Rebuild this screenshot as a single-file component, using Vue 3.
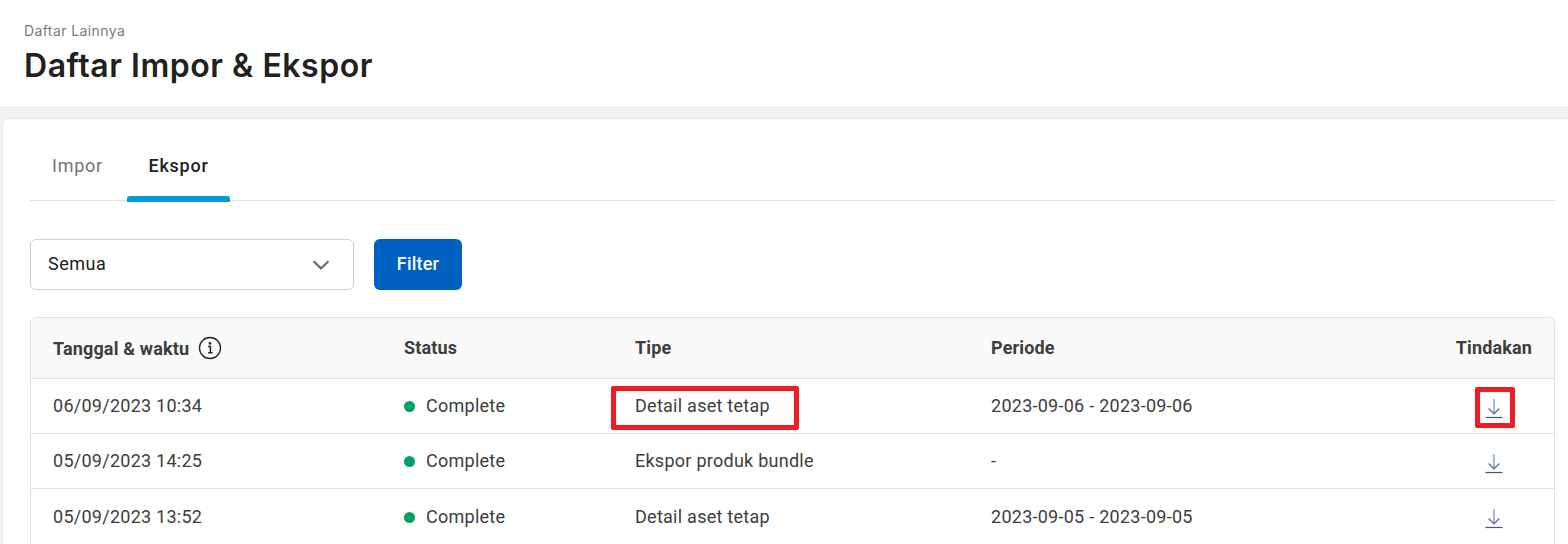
<script setup>
const rows = [
  { date: '06/09/2023 10:34', type: 'Detail aset tetap', period: '2023-09-06 - 2023-09-06', mark: true },
  { date: '05/09/2023 14:25', type: 'Ekspor produk bundle', period: '-', mark: false },
  { date: '05/09/2023 13:52', type: 'Detail aset tetap', period: '2023-09-05 - 2023-09-05', mark: false },
]
</script>

<template>
  <div class="page">
    <header class="head">
      <div class="crumb">Daftar Lainnya</div>
      <h1 class="title">Daftar Impor &amp; Ekspor</h1>
    </header>
    <main class="card">
      <nav class="tabs">
        <div class="tab">Impor</div>
        <div class="tab active">Ekspor</div>
      </nav>
      <div class="filters">
        <div class="select">
          <span>Semua</span>
          <svg width="18" height="10" viewBox="0 0 18 10" fill="none"><path d="M1.5 1.2 9 8.4l7.5-7.2" stroke="#6d6e70" stroke-width="2.2"/></svg>
        </div>
        <button class="btn">Filter</button>
      </div>
      <div class="table">
        <div class="row hrow">
          <div class="c c1">Tanggal &amp; waktu
            <svg class="info" width="24" height="24" viewBox="0 0 24 24" fill="none">
              <circle cx="12" cy="12" r="10.5" stroke="#222" stroke-width="1.3"/>
              <circle cx="12" cy="7.4" r="1.3" fill="#222"/>
              <path d="M10.2 10.6h2.2v6M10.2 16.8h4.4" stroke="#222" stroke-width="1.5"/>
            </svg>
          </div>
          <div class="c c2 up">Status</div>
          <div class="c c3 up">Tipe</div>
          <div class="c c4 up">Periode</div>
          <div class="c c5 up">Tindakan</div>
        </div>
        <div v-for="(r, i) in rows" :key="i" class="row">
          <div class="c c1">{{ r.date }}</div>
          <div class="c c2"><i class="dot"></i>Complete</div>
          <div class="c c3"><span class="t" :class="{ mark: r.mark }">{{ r.type }}</span></div>
          <div class="c c4">{{ r.period }}</div>
          <div class="c c5 act">
            <span class="dl" :class="{ mark: r.mark }">
              <svg width="18" height="22" viewBox="0 0 18 22" fill="none">
                <path d="M9 2v14.5" stroke="#5f8fc4" stroke-width="1.2"/>
                <path d="M3.6 11.5 9 16.8l5.4-5.3" stroke="#5d6f8c" stroke-width="1.2"/>
                <path d="M.5 20.5h17" stroke="#44546a" stroke-width="1.2"/>
              </svg>
            </span>
          </div>
        </div>
      </div>
    </main>
  </div>
</template>

<style>
html, body { margin: 0; height: 544px; overflow: hidden; background: #f2f3f7; }
</style>

<style scoped>
.page { height: 544px; overflow: hidden; background: #f2f3f7; font-family: Roboto, "Liberation Sans", sans-serif; color: #3d3d3d; }
.head { box-sizing: border-box; background: #fff; border-bottom: 1px solid #e6e7ec; padding: 22px 24px 0; height: 108px; }
.crumb { font: 400 14px/18px Inter, sans-serif; letter-spacing: .4px; color: #7a7a7a; }
.title { margin: 6px 0 0; font: 600 32px/40px Inter, sans-serif; letter-spacing: .53px; color: #212121; }
.card { margin: 10px 0 0 2px; background: #fff; border: 1px solid #e4e5ea; border-right: 0; border-radius: 6px 0 0 0; padding: 0 13px 0 27px; height: 500px; box-sizing: border-box; }
.tabs { display: flex; height: 82px; box-sizing: border-box; border-bottom: 1px solid #e0e0e0; }
.tab { width: 97px; height: 81px; box-sizing: border-box; padding: 35px 2px 0 0; text-align: center; font-size: 18px; line-height: 24px; letter-spacing: .75px; color: #757575; }
.tab.active { width: 103px; padding-right: 0; color: #212121; font-weight: 500; position: relative; }
.tab.active::after { content: ""; position: absolute; left: 0; right: 0; bottom: -2px; height: 6px; background: #009ade; border-radius: 3px 3px 0 0; }
.filters { display: flex; gap: 20px; margin-top: 38px; }
.select { width: 324px; height: 51px; box-sizing: border-box; border: 1px solid #ccd2d4; border-radius: 6px; padding: 0 23px 2px 17px; display: flex; align-items: center; justify-content: space-between; font-size: 18px; letter-spacing: .5px; color: #212121; }
.select svg { margin-top: 2px; }
.btn { width: 88px; height: 51px; border: 0; border-radius: 6px; background: #0060bf; color: #fff; font: 500 18px Roboto, sans-serif; letter-spacing: .2px; padding: 0 0 2px; }
.table { margin-top: 27px; border: 1px solid #e0e0e0; border-bottom: 0; border-radius: 6px 6px 0 0; }
.row { display: flex; height: 55.2px; padding-bottom: .8px; box-sizing: border-box; border-bottom: 1px solid #e0e0e0; align-items: center; font-size: 18px; letter-spacing: .26px; }
.hrow { height: 61px; padding-bottom: 0; background: #fafafa; font-weight: 700; font-size: 18px; letter-spacing: .15px; border-radius: 6px 6px 0 0; color: #3d3d3d; }
.up { margin-bottom: 2px; }
.c { box-sizing: border-box; }
.c1 { width: 373px; padding-left: 22px; display: flex; align-items: center; gap: 9px; }
.c2 { width: 231px; display: flex; align-items: center; }
.c3 { width: 356px; }
.c4 { flex: 1; }
.c5 { padding-right: 22px; text-align: right; white-space: nowrap; width: 120px; }
.act { display: flex; justify-content: center; padding-right: 0; }
.dl svg { margin-top: 4px; }
.dot { width: 11px; height: 11px; margin-top: 2px; border-radius: 50%; background: #00a163; margin-right: 11px; }
.t { position: relative; }
.t.mark::after { content: ""; position: absolute; left: -24px; top: -9px; width: 188px; height: 44px; border: 5px solid #ee1c25; border-radius: 2px; box-sizing: border-box; }
.dl { position: relative; display: flex; }
.dl.mark::after { content: ""; position: absolute; left: -10px; top: -6px; width: 40px; height: 41px; border: 5px solid #ee1c25; border-radius: 2px; box-sizing: border-box; }
</style>
